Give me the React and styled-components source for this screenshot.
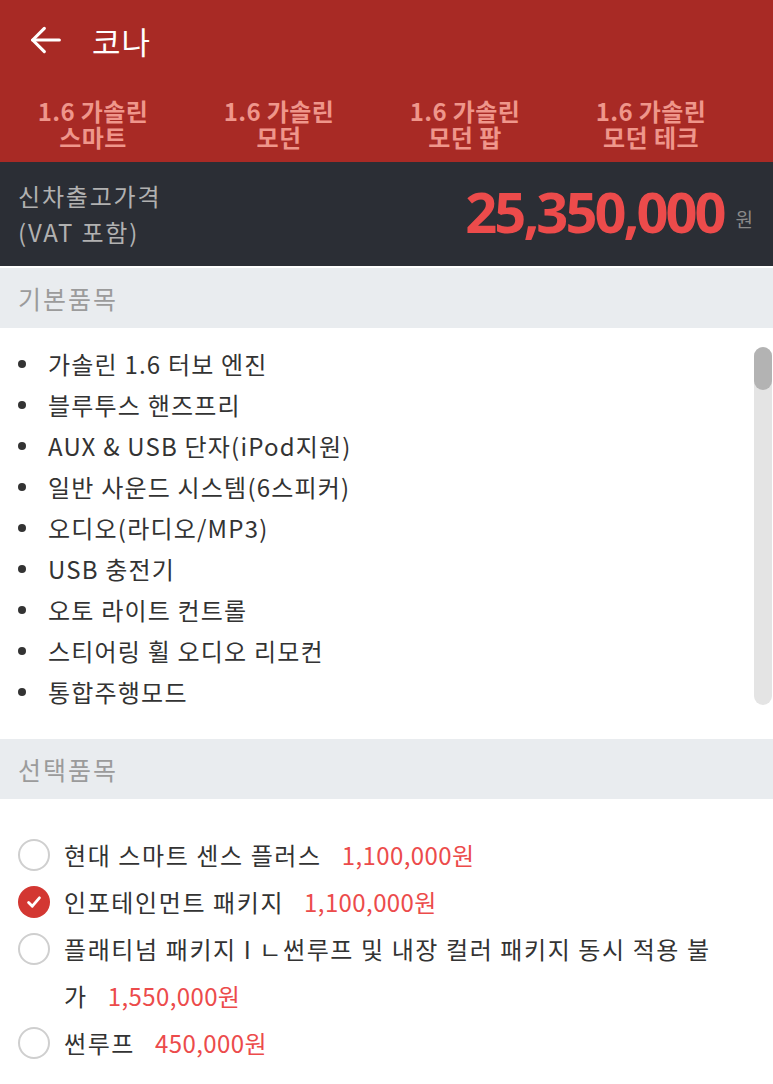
import React, { useState } from 'react'
import styled, { createGlobalStyle } from 'styled-components'

const GlobalStyle = createGlobalStyle`
    body {
        margin: 0;
        background: #fff;
        font-family: "Noto Sans CJK KR", "Noto Sans", sans-serif;
    }
    * { box-sizing: border-box; }
`;

const Page = styled.div`
    width: 773px;
    background: #fff;
`;

const Header = styled.header`
    background-color: #a82a25;
`;

const TitleBar = styled.div`
    height: 80px;
    display: flex;
    align-items: center;
    padding-left: 26px;
    gap: 26px;
    color: #fff;
`;

const BackButton = styled.button`
    border: 0;
    background: none;
    padding: 0;
    display: flex;
    color: #fff;
`;

const Title = styled.h1`
    margin: 0;
    font-size: 31px;
    font-weight: 400;
    letter-spacing: 1px;
    line-height: 1;
`;

const Tabs = styled.nav`
    display: grid;
    grid-template-columns: repeat(4, 186px);
    height: 82px;
    align-items: center;
    overflow: hidden;
`;

const Tab = styled.div`
    text-align: center;
    font-size: 24px;
    font-weight: 700;
    letter-spacing: 0.4px;
    line-height: 26px;
    color: #ef968b;
    padding-top: 6px;
`;

const PriceBar = styled.div`
    background: #2b2e35;
    height: 104px;
    display: flex;
    align-items: center;
    justify-content: space-between;
    padding: 0 20px 0 18px;
`;

const PriceLabel = styled.div`
    color: #b1b1b1;
    font-size: 24px;
    letter-spacing: 1.8px;
    line-height: 36px;
`;

const PriceValue = styled.div`
    display: flex;
    align-items: center;
    gap: 12px;
`;

const BigPrice = styled.span`
    color: #ec4b4b;
    font-size: 56px;
    font-weight: 700;
    letter-spacing: -3px;
    line-height: 1;
    font-family: "Noto Sans", "Noto Sans CJK KR", sans-serif;
    margin-top: -6px;
`;

const Won = styled.span`
    color: #8a8a8a;
    font-size: 19px;
    padding-top: 8px;
`;

const SectionHeader = styled.div`
    background: #e9ecef;
    height: 60px;
    display: flex;
    align-items: center;
    padding-left: 18px;
    font-size: 25px;
    letter-spacing: 2px;
    color: #9b9b9b;
    margin-top: ${p => p.$gap || 0}px;
`;

const ListArea = styled.div`
    display: flex;
    height: 377px;
    padding: 15px 1px 0 0;
`;

const BasicList = styled.ul`
    flex: 1;
    margin: 0;
    padding: 0 0 0 18px;
    list-style: none;
    overflow: hidden;
`;

const BasicItem = styled.li`
    position: relative;
    padding-left: 30px;
    font-size: 24px;
    letter-spacing: 1.2px;
    line-height: 41px;
    color: #333;

    &::before {
        content: '';
        position: absolute;
        left: 0;
        top: 17px;
        width: 8px;
        height: 8px;
        border-radius: 50%;
        background: #333;
    }
`;

const Track = styled.div`
    width: 18px;
    height: 358px;
    margin-top: 4px;
    border-radius: 9px;
    background: #e4e4e4;
`;

const Thumb = styled.div`
    height: 43px;
    border-radius: 9px;
    background: #b3b3b3;
`;

const Options = styled.div`
    padding: 32px 40px 30px 18px;
`;

const OptionRow = styled.label`
    display: flex;
    align-items: flex-start;
    gap: 14px;
    font-size: 24px;
    letter-spacing: 1.6px;
    line-height: 47px;
    color: #333;
    cursor: pointer;
`;

const Radio = styled.span`
    flex: none;
    width: 32px;
    height: 32px;
    margin-top: 8px;
    border-radius: 50%;
    border: ${p => (p.$checked ? '0' : '2px solid #cfcfcf')};
    background: ${p => (p.$checked ? '#d33732' : '#fff')};
    display: flex;
    align-items: center;
    justify-content: center;
`;

const OptionText = styled.span`
    flex: 1;
`;

const OptionPrice = styled.span`
    color: #ec4b4b;
    margin-left: 20px;
    letter-spacing: 0.4px;
`;

const tabs = [
    ['1.6 가솔린', '스마트'],
    ['1.6 가솔린', '모던'],
    ['1.6 가솔린', '모던 팝'],
    ['1.6 가솔린', '모던 테크'],
];

const basics = [
    '가솔린 1.6 터보 엔진',
    '블루투스 핸즈프리',
    'AUX & USB 단자(iPod지원)',
    '일반 사운드 시스템(6스피커)',
    '오디오(라디오/MP3)',
    'USB 충전기',
    '오토 라이트 컨트롤',
    '스티어링 휠 오디오 리모컨',
    '통합주행모드',
    '전자식 파킹 브레이크',
    '운전석 통풍시트',
];

const options = [
    { name: '현대 스마트 센스 플러스', price: '1,100,000원' },
    { name: '인포테인먼트 패키지', price: '1,100,000원' },
    { name: '플래티넘 패키지 I ㄴ썬루프 및 내장 컬러 패키지 동시 적용 불가', price: '1,550,000원' },
    { name: '썬루프', price: '450,000원' },
];

function ArrowLeft() {
    return (
        <svg width="40" height="40" viewBox="0 0 24 24" fill="none" stroke="currentColor" strokeWidth="1.9" strokeLinecap="round" strokeLinejoin="round">
            <path d="M20 12H4" />
            <path d="M11 5l-7 7 7 7" />
        </svg>
    );
}

function Check() {
    return (
        <svg width="20" height="20" viewBox="0 0 24 24" fill="none" stroke="#fff" strokeWidth="3.4" strokeLinecap="round" strokeLinejoin="round">
            <path d="M5.5 12.5l4.5 4.5L18.5 7" />
        </svg>
    );
}

export default function App() {
    const [picked, setPicked] = useState([1]);

    const toggle = (i) => {
        setPicked(picked.includes(i) ? picked.filter(x => x !== i) : [...picked, i]);
    };

    return (
        <Page>
            <GlobalStyle />
            <Header>
                <TitleBar>
                    <BackButton><ArrowLeft /></BackButton>
                    <Title>코나</Title>
                </TitleBar>
                <Tabs>
                    {tabs.map((t, i) => (
                        <Tab key={i}>{t[0]}<br />{t[1]}</Tab>
                    ))}
                </Tabs>
            </Header>

            <PriceBar>
                <PriceLabel>신차출고가격<br />(VAT 포함)</PriceLabel>
                <PriceValue>
                    <BigPrice>25,350,000</BigPrice>
                    <Won>원</Won>
                </PriceValue>
            </PriceBar>

            <SectionHeader $gap={2}>기본품목</SectionHeader>
            <ListArea>
                <BasicList>
                    {basics.map(b => <BasicItem key={b}>{b}</BasicItem>)}
                </BasicList>
                <Track><Thumb /></Track>
            </ListArea>

            <SectionHeader $gap={34}>선택품목</SectionHeader>
            <Options>
                {options.map((o, i) => (
                    <OptionRow key={i} onClick={() => toggle(i)}>
                        <Radio $checked={picked.includes(i)}>
                            {picked.includes(i) && <Check />}
                        </Radio>
                        <OptionText>
                            {o.name}
                            <OptionPrice>{o.price}</OptionPrice>
                        </OptionText>
                    </OptionRow>
                ))}
            </Options>
        </Page>
    );
}
